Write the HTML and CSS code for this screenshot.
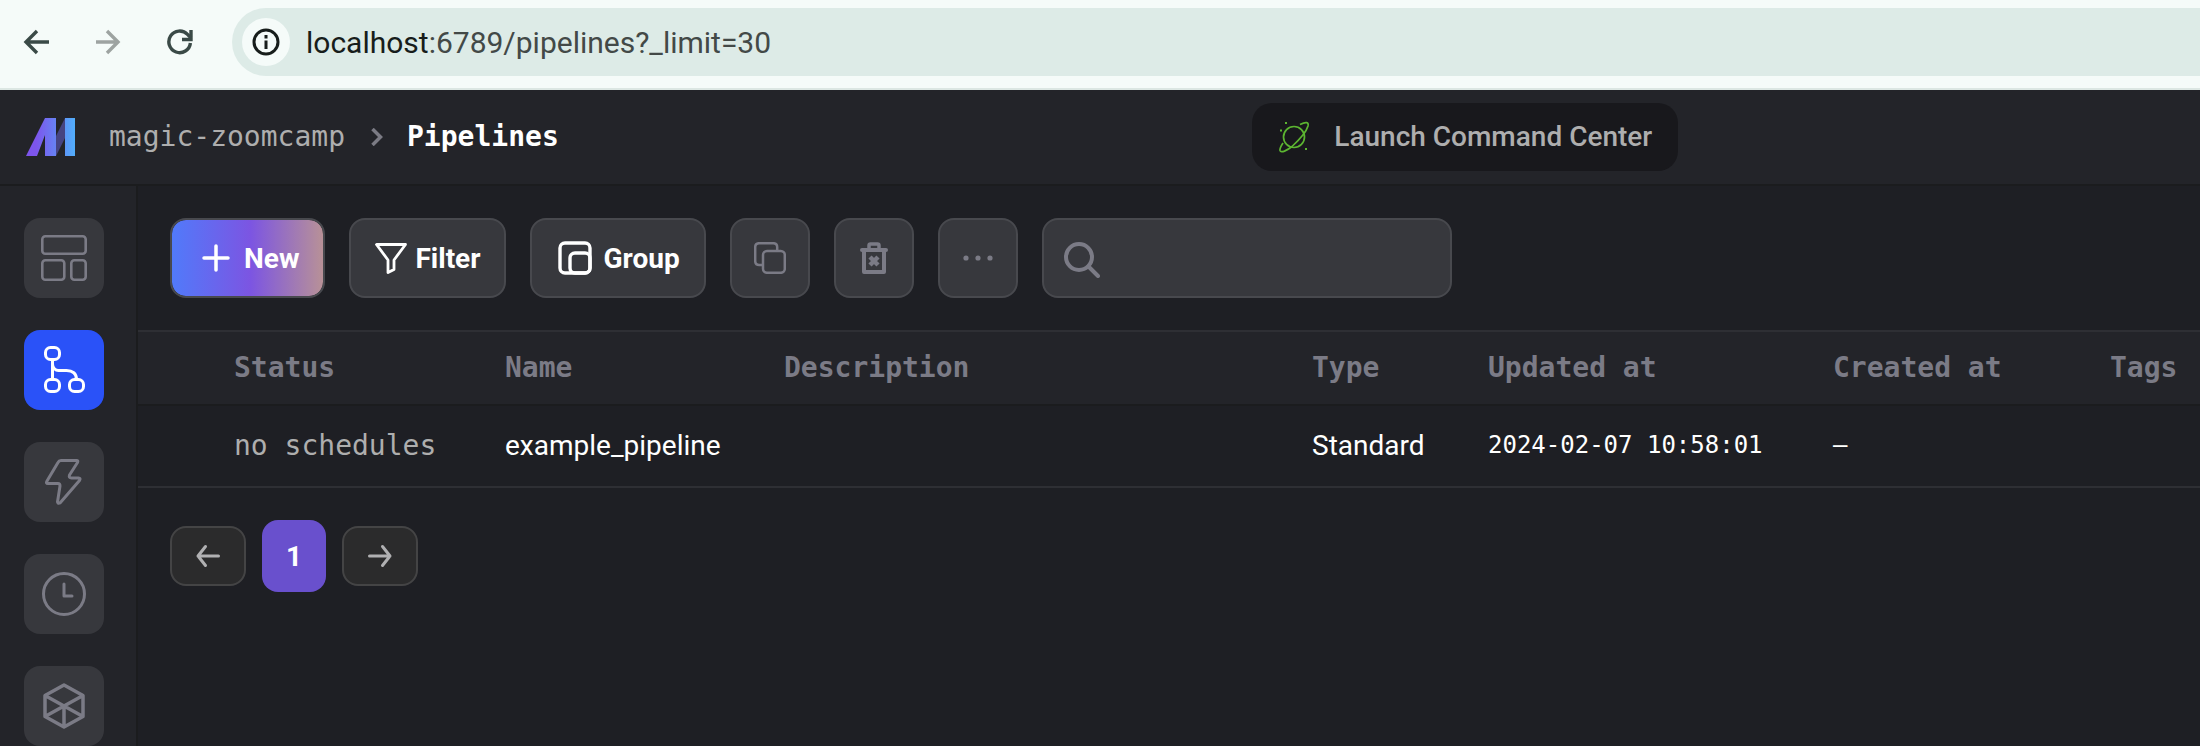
FILE: index.html
```html
<!DOCTYPE html>
<html lang="en">
<head>
<meta charset="utf-8">
<title>Pipelines</title>
<link rel="stylesheet" href="styles.css">
</head>
<body>
<div class="browser">
  <button class="browser-btn" aria-label="Back"><svg width="28" height="28" viewBox="0 0 28 28" fill="none" stroke="#3a4a47" stroke-width="3.400"><path d="M27 14H5M15 3L4 14l11 11"/></svg></button>
  <button class="browser-btn" aria-label="Forward"><svg width="28" height="28" viewBox="0 0 28 28" fill="none" stroke="#9da3a1" stroke-width="3.400"><path d="M2 14h22M13 3l11 11-11 11"/></svg></button>
  <button class="browser-btn" aria-label="Reload"><svg width="28" height="28" viewBox="0 0 28 28" fill="none" stroke="#3a4a47" stroke-width="3.400"><path d="M24.400 15A10.800 10.800 0 1 1 21.500 6.400L25 10"/><path d="M25 2v9.500H16"/></svg></button>
  <div class="address">
    <button class="site-info" aria-label="Site information"><svg width="28" height="28" viewBox="0 0 28 28" fill="none" stroke="#171d1b" stroke-width="3"><circle cx="14" cy="14" r="12"/><path d="M14 12.500V21M14 7v3.500"/></svg></button>
    <span class="url"><span class="host">localhost</span>:6789/pipelines?_limit=30</span>
  </div>
</div>

<header class="header">
  <nav class="crumbs" aria-label="Breadcrumb">
    <a class="logo" href="#" aria-label="Home">
      <svg width="50" height="38" viewBox="0 0 50 38">
        <defs><linearGradient id="lg" gradientUnits="userSpaceOnUse" x1="10" y1="0" x2="50" y2="0"><stop offset="0" stop-color="#7d55ec"/><stop offset="1" stop-color="#50b0fb"/></linearGradient></defs>
        <path d="M30 18L39 0V20L30 38z" fill="#464482"/>
        <path d="M0 38L19 0H30V38H19V17L11 38zM39 0H49V38H39z" fill="url(#lg)"/>
      </svg>
    </a>
    <a class="crumb" href="#">magic-zoomcamp</a>
    <svg class="chevron" width="12" height="18" viewBox="0 0 12 18" fill="none" stroke="#7b7b84" stroke-width="3.500"><path d="M1.500 1L9.500 9l-8 8"/></svg>
    <span class="crumb current">Pipelines</span>
  </nav>
  <button class="launch">
    <svg width="32" height="32" viewBox="0 0 32 32" fill="none" stroke="#5cb531" stroke-width="1.700"><circle cx="16" cy="16" r="10.500"/><path d="M22 3.500C28 .5 31 1 30 5c-2 7-9 14-16 20.500C9 29.500 3 32.500 2 29.500c-.5-2 1-4.500 3-7.500"/><path d="M7 2h2M2 9.500h2M27 28h2" stroke-width="2"/></svg>
    <span>Launch Command Center</span>
  </button>
</header>

<div class="app">
  <nav class="sidebar" aria-label="Main">
    <a class="side" href="#" aria-label="Overview"><svg width="48" height="48" viewBox="0 0 48 48" fill="none" stroke="#7b7b86" stroke-width="2.600"><rect x="2.300" y="2.300" width="43.400" height="17.400" rx="3"/><rect x="2.300" y="26.300" width="22" height="19.400" rx="3"/><rect x="31.300" y="26.300" width="14.400" height="19.400" rx="3"/></svg></a>
    <a class="side active" href="#" aria-label="Pipelines"><svg width="48" height="48" viewBox="0 0 48 48" fill="none" stroke="#fff" stroke-width="3"><rect x="5.500" y="1.500" width="14" height="12" rx="5"/><rect x="5.500" y="33.500" width="14" height="12" rx="5"/><rect x="29.500" y="33.500" width="14" height="12" rx="5"/><path d="M12.500 14v19M12.500 18c0 4 3 6.500 6 6.500h8c6 0 10 3 10 9"/></svg></a>
    <a class="side" href="#" aria-label="Triggers"><svg width="48" height="48" viewBox="0 0 48 48" fill="none" stroke="#7b7b86" stroke-width="3" stroke-linejoin="round"><path d="M21 2.500h15.500q2 0 1 2L29.500 17q-1 3 2 3h7q2.500 0 1 2.500L20 45q-2 1-2.500-1l2.500-16q0-2.500-2-2.500H8q-2.500 0-1-2.500L18 4.500q1-2 3-2z"/></svg></a>
    <a class="side" href="#" aria-label="Runs"><svg width="48" height="48" viewBox="0 0 48 48" fill="none" stroke="#7b7b86" stroke-width="3" stroke-linecap="round" stroke-linejoin="round"><circle cx="24" cy="24" r="20.500"/><path d="M24 14v12h8"/></svg></a>
    <a class="side" href="#" aria-label="Data products"><svg width="48" height="48" viewBox="0 0 48 48" fill="none" stroke="#7b7b86" stroke-width="3.500" stroke-linejoin="round"><path d="M24 3L5 13.500v21L24 45l19-10.500v-21zM5 13.500L43 34.500M43 13.500L5 34.500M24 24v21"/></svg></a>
  </nav>

  <main class="main">
    <div class="toolbar">
      <button class="btn new"><svg width="28" height="28" viewBox="0 0 28 28" fill="none" stroke="#fff" stroke-width="3.500" stroke-linecap="round"><path d="M14 2v24M2 14h24"/></svg>New</button>
      <button class="btn filter"><svg width="32" height="32" viewBox="0 0 32 32" fill="none" stroke="#fff" stroke-width="2.800" stroke-linejoin="round"><path d="M1.500 2.500h29L19 18v9.500l-6 3V18z"/></svg>Filter</button>
      <button class="btn group"><svg width="34" height="34" viewBox="0 0 34 34" fill="none" stroke="#fff" stroke-width="3.400"><rect x="2" y="2" width="30" height="30" rx="5"/><rect x="12" y="12" width="20" height="20" rx="5"/></svg>Group</button>
      <button class="btn square" aria-label="Clone"><svg width="32" height="32" viewBox="0 0 32 32" fill="none" stroke="#7b7b86" stroke-width="2.500"><path d="M9 23H5.200q-4 0-4-4V5.200q0-4 4-4h14q4 0 4 4v4"/><rect x="9" y="9" width="21.800" height="21.800" rx="4"/></svg></button>
      <button class="btn square" aria-label="Delete"><svg width="32" height="32" viewBox="0 0 32 32" fill="none" stroke="#7b7b86" stroke-width="4"><path d="M4 8h24" stroke-linecap="round"/><path d="M6 9v21h20V9" stroke-linejoin="round"/><path d="M11 7V3.500q0-1.500 1.500-1.500h7q1.500 0 1.500 1.500V7" stroke-width="3.500"/><path d="M12 15l8 8M20 15l-8 8" stroke-width="4.500"/></svg></button>
      <button class="btn square" aria-label="More"><svg width="32" height="32" viewBox="0 0 32 32" fill="#7b7b86"><circle cx="4" cy="16" r="2.600"/><circle cx="16" cy="16" r="2.600"/><circle cx="28" cy="16" r="2.600"/></svg></button>
      <label class="search"><svg width="36" height="40" viewBox="0 0 36 40" fill="none" stroke="#7b7b86" stroke-width="4" stroke-linecap="round"><circle cx="15" cy="19" r="13"/><path d="M25 29l9 9"/></svg><input type="search" aria-label="Search"></label>
    </div>

    <table class="table">
      <colgroup><col class="c-act"><col class="c-status"><col class="c-name"><col><col class="c-type"><col class="c-updated"><col class="c-created"><col class="c-tags"></colgroup>
      <thead><tr><th></th><th>Status</th><th>Name</th><th>Description</th><th>Type</th><th>Updated at</th><th>Created at</th><th>Tags</th></tr></thead>
      <tbody><tr><td></td><td class="status">no schedules</td><td>example_pipeline</td><td></td><td>Standard</td><td class="date">2024-02-07 10:58:01</td><td class="date">–</td><td></td></tr></tbody>
    </table>

    <nav class="pages" aria-label="Pagination">
      <button class="page-btn" aria-label="Previous page"><svg width="24" height="24" viewBox="0 0 24 24" fill="none" stroke="#b0b0b2" stroke-width="3" stroke-linecap="round" stroke-linejoin="round"><path d="M22.500 12H2M9.500 2.500L2 12l7.500 9.500"/></svg></button>
      <button class="page-current" aria-current="page">1</button>
      <button class="page-btn" aria-label="Next page"><svg width="24" height="24" viewBox="0 0 24 24" fill="none" stroke="#b0b0b2" stroke-width="3" stroke-linecap="round" stroke-linejoin="round"><path d="M1.500 12H22M14.500 2.500L22 12l-7.500 9.500"/></svg></button>
    </nav>
  </main>
</div>
</body>
</html>
```

FILE: styles.css
```css
* { box-sizing: border-box; }
html, body { height: 100%; }
body {
  margin: 0;
  display: flex;
  flex-direction: column;
  overflow: hidden;
  background: #1e1f24;
  color: #fff;
  font-family: Roboto, sans-serif;
  font-size: 28px;
}
button, input { font: inherit; color: inherit; margin: 0; padding: 0; border: 0; background: none; }
a { color: inherit; text-decoration: none; }
svg { display: block; flex: none; }

.browser {
  display: flex;
  align-items: center;
  gap: 44px;
  padding: 8px 0 12px 22px;
  background: #f5fbf9;
  border-bottom: 2px solid #dce7e3;
}
.browser-btn { padding: 0; }
.address {
  flex: 1;
  display: flex;
  align-items: center;
  gap: 16px;
  height: 68px;
  margin-left: -6px;
  padding-left: 10px;
  border-radius: 34px 0 0 34px;
  background: #ddebe7;
}
.site-info {
  display: grid;
  place-items: center;
  width: 48px;
  height: 48px;
  border-radius: 50%;
  background: #f5fbf9;
}
.url { font-size: 30px; color: #434947; }
.host { color: #171d1b; }

.header {
  display: grid;
  grid-template-columns: 12fr auto 5fr;
  align-items: center;
  height: 96px;
  flex: none;
  background: #232429;
  border-bottom: 2px solid #1b1c1e;
}
.crumbs { display: flex; align-items: center; padding-left: 26px; }
.logo { margin-right: 33px; }
.crumb { padding-bottom: 2px; font-family: "DejaVu Sans Mono", monospace; font-size: 28px; color: #aeaeae; }
.chevron { margin: 0 24px 0 26px; }
.current { color: #fff; font-weight: 700; }
.launch {
  display: flex;
  align-items: center;
  gap: 24px;
  height: 68px;
  padding: 0 26px;
  border-radius: 20px;
  background: #18181c;
  color: #aeaeae;
  font-weight: 500;
}
.launch span { padding-bottom: 2px; }

.app { flex: 1; display: flex; min-height: 0; }
.sidebar {
  display: flex;
  flex-direction: column;
  gap: 32px;
  padding: 32px 32px 0 24px;
  background: #232429;
  border-right: 2px solid #1b1c1e;
}
.side {
  flex: none;
  display: grid;
  place-items: center;
  width: 80px;
  height: 80px;
  border-radius: 16px;
  background: #37383d;
}
.active { background: #2a52f8; }

.main { flex: 1; min-width: 0; }
.toolbar { display: flex; gap: 24px; padding: 32px; }
.btn {
  display: flex;
  align-items: center;
  justify-content: center;
  height: 80px;
  border: 2px solid #48494e;
  border-radius: 16px;
  background: #37383d;
  font-weight: 700;
}
.new {
  gap: 14px;
  padding: 0 24px 0 30px;
  background: linear-gradient(90deg, #517afa 0%, #7c55e2 52%, #b89197 100%) padding-box;
}
.filter { gap: 8px; padding: 0 23px 0 24px; }
.group { gap: 12px; padding: 0 24px 0 26px; }
.square { width: 80px; }
.search {
  display: flex;
  align-items: center;
  gap: 16px;
  width: 410px;
  height: 80px;
  padding: 0 20px;
  border: 2px solid #48494e;
  border-radius: 16px;
  background: #37383d;
}
.search input { flex: 1; min-width: 0; outline: 0; }

.table { width: 100%; table-layout: fixed; border-collapse: separate; border-spacing: 0; }
.table th, .table td { padding: 0 0 2px 24px; text-align: left; white-space: nowrap; }
.table th {
  height: 76px;
  background: #232429;
  border-top: 2px solid #2e2f34;
  border-bottom: 2px solid #1b1c1e;
  color: #7b7b86;
  font-family: "DejaVu Sans Mono", monospace;
  font-size: 28px;
  font-weight: 700;
}
.table td { height: 82px; border-bottom: 2px solid #2e2f34; }
.table .status { font-family: "DejaVu Sans Mono", monospace; font-size: 28px; color: #aeaeae; }
.table .date { font-family: "DejaVu Sans Mono", monospace; font-size: 24px; }
.c-act { width: 72px; }
.c-status { width: 271px; }
.c-name { width: 279px; }
.c-type { width: 176px; }
.c-updated { width: 345px; }
.c-created { width: 277px; }
.c-tags { width: 114px; }

.pages { display: flex; align-items: center; gap: 16px; padding: 32px; }
.page-btn {
  display: grid;
  place-items: center;
  width: 76px;
  height: 60px;
  border: 2px solid #444445;
  border-radius: 16px;
  background: #2b2b2c;
}
.page-current {
  width: 64px;
  height: 72px;
  border-radius: 16px;
  background: #6950cd;
  font-weight: 700;
}
```
